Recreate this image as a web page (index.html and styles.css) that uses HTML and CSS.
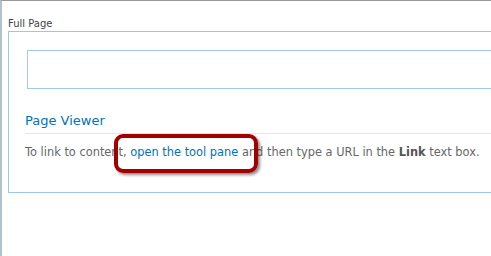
FILE: index.html
```html
<!DOCTYPE html>
<html lang="en">
<head>
    <meta charset="UTF-8">
    <title>Full Page</title>
    <link rel="stylesheet" href="styles.css">
</head>
<body>
    <div class="page">
        <div class="zone-title">Full Page</div>
        <div class="zone">
            <div class="add-box"></div>
            <div class="webpart">
                <div class="webpart-title">Page Viewer</div>
                <div class="webpart-body">
                    To link to content, <a href="#">open the tool pane</a> and then type a URL in the <b>Link</b> text box.
                </div>
            </div>
        </div>
    </div>
    <div class="callout"></div>
</body>
</html>
```

FILE: styles.css
```css
html, body {
    margin: 0;
    padding: 0;
    overflow: hidden;
    background-color: white;
}

body {
    font-family: "DejaVu Sans", Verdana, sans-serif;
    width: 491px;
    height: 256px;
    position: relative;
}

.page {
    height: 255px;
    border-top: 1px solid #9a9a9a;
    border-left: 2px solid #b3c1cf;
    padding-left: 6px;
    overflow: hidden;
}

.zone-title {
    font-size: 10px;
    color: #444;
    padding-top: 17px;
    height: 13px;
}

.zone {
    width: 600px;
    height: 162px;
    border: 1px solid #9cc6e8;
    box-sizing: border-box;
    padding: 18px 0 0 16px;
}

.add-box {
    height: 39px;
    margin-left: 2px;
    border: 1px solid #a3c9f0;
    box-sizing: border-box;
}

.webpart {
    margin-top: 24px;
}

.webpart-title {
    font-size: 13px;
    color: #0072bc;
    padding-bottom: 5px;
    border-bottom: 1px solid #e6e6e6;
}

.webpart-body {
    font-size: 11.4px;
    color: #676767;
    padding-top: 11px;
}

.webpart-body a {
    color: #0072bc;
    text-decoration: none;
}

.webpart-body b {
    color: #555;
}

.callout {
    position: absolute;
    left: 114px;
    top: 134px;
    width: 144px;
    height: 39px;
    box-sizing: border-box;
    border: 4px solid #a30000;
    border-radius: 9px;
    box-shadow: 2px 2px 3px rgba(0, 0, 0, 0.45);
}
```
